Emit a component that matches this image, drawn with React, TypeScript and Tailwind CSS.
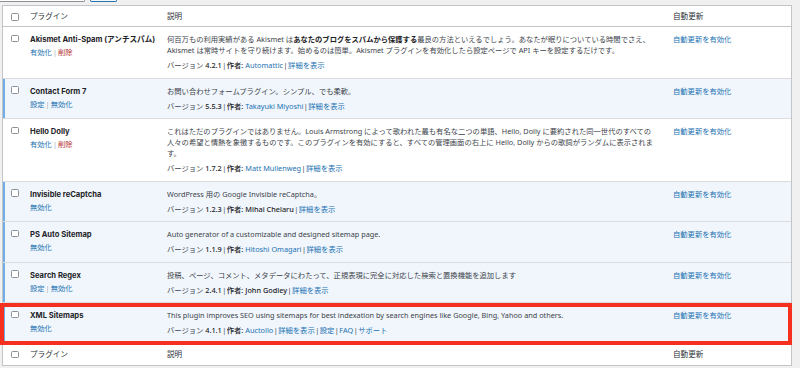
import React from "react";

const link = "text-[#2271b1]";

function Checkbox() {
  return <div className="w-[7.5px] h-[7.5px] rounded-[1.5px] border border-[#8c8f94] bg-white" />;
}

function Sep() {
  return <span className="text-[#a7aaad] mx-[1px]">|</span>;
}

function VSep() {
  return <span className="mx-[0.5px]">|</span>;
}

type RowProps = {
  active?: boolean;
  name: string;
  actions: React.ReactNode;
  desc: React.ReactNode;
  version: React.ReactNode;
};

function Row({ active, name, actions, desc, version }: RowProps) {
  return (
    <div
      className={`grid grid-cols-[22px_135px_506px_1fr] border-b border-[#dcdcde] ${
        active ? "bg-[#f0f6fc] shadow-[inset_2px_0_0_#72aee6]" : "bg-white"
      }`}
    >
      <div className="pl-[8px] pt-[7.5px]">
        <Checkbox />
      </div>
      <div className="pl-[5px] pt-[7px] pb-[6.5px]">
        <div className="font-bold text-[7.6px] font-[family-name:Inter,'Noto_Sans_CJK_JP',sans-serif] text-[#1d2327] leading-[11px] whitespace-nowrap">
          {name}
        </div>
        <div className="mt-[2px] leading-[11px] whitespace-nowrap">{actions}</div>
      </div>
      <div className="pl-[7px] pt-[7px] pb-[6.5px]">
        <div className="leading-[11px] whitespace-nowrap">{desc}</div>
        <div className="mt-[4px] leading-[11px] whitespace-nowrap">{version}</div>
      </div>
      <div className="pl-[7px] pt-[7px] leading-[11px] whitespace-nowrap">
        <span className={link}>自動更新を有効化</span>
      </div>
    </div>
  );
}

function HeadRow({ top }: { top?: boolean }) {
  return (
    <div
      className={`grid grid-cols-[22px_135px_506px_1fr] h-[21px] bg-white text-[7.6px] text-[#2c3338] ${
        top ? "border-b border-[#c3c4c7]" : ""
      }`}
    >
      <div className="pl-[8px] pt-[7px]">
        <Checkbox />
      </div>
      <div className="pl-[5px] pt-[5px] leading-[11px]">プラグイン</div>
      <div className="pl-[7px] pt-[5px] leading-[11px]">説明</div>
      <div className="pl-[7px] pt-[5px] leading-[11px]">自動更新</div>
    </div>
  );
}

function Ver({
  v,
  author,
  authorLink,
  extra,
}: {
  v: string;
  author: string;
  authorLink?: boolean;
  extra?: React.ReactNode;
}) {
  return (
    <>
      バージョン <span className="font-medium text-[#1d2327]">{v}</span>
      <VSep />
      <span className="font-medium text-[#1d2327]">作者:</span>{" "}
      {authorLink ? (
        <span className={link}>{author}</span>
      ) : (
        <span className="font-medium text-[#1d2327]">{author}</span>
      )}
      <VSep />
      <span className={link}>詳細を表示</span>
      {extra}
    </>
  );
}

export default function App() {
  return (
    <div className="w-[800px] h-[368px] overflow-hidden bg-[#f0f0f1] text-[7.3px] text-[#3c434a] font-[family-name:'Noto_Sans','Noto_Sans_CJK_JP',sans-serif]">
      <div className="flex h-[5px] items-start">
        <div className="w-[85px] h-[2px] bg-white border-b border-r border-[#8c8f94] rounded-br-[2px]" />
        <div className="ml-[5px] w-[27px] h-[2px] bg-[#f6f7f7] border-b border-x border-[#2271b1] rounded-b-[2px]" />
      </div>
      <div className="ml-[2px] w-[790px] border border-[#c3c4c7] bg-white">
        <HeadRow top />
        <Row
          name="Akismet Anti-Spam (アンチスパム)"
          actions={
            <>
              <span className={link}>有効化</span>
              <Sep />
              <span className="text-[#b32d2e]">削除</span>
            </>
          }
          desc={
            <>
              何百万もの利用実績がある Akismet は
              <b className="font-bold text-[#1d2327]">あなたのブログをスパムから保護する</b>
              最良の方法といえるでしょう。あなたが眠りについている時間でさえ、
              <br />
              Akismet は常時サイトを守り続けます。始めるのは簡単。Akismet プラグインを有効化したら設定ページで API キーを設定するだけです。
            </>
          }
          version={<Ver v="4.2.1" author="Automattic" authorLink />}
        />
        <Row
          active
          name="Contact Form 7"
          actions={
            <>
              <span className={link}>設定</span>
              <Sep />
              <span className={link}>無効化</span>
            </>
          }
          desc="お問い合わせフォームプラグイン。シンプル、でも柔軟。"
          version={<Ver v="5.5.3" author="Takayuki Miyoshi" authorLink />}
        />
        <Row
          name="Hello Dolly"
          actions={
            <>
              <span className={link}>有効化</span>
              <Sep />
              <span className="text-[#b32d2e]">削除</span>
            </>
          }
          desc={
            <>
              これはただのプラグインではありません。Louis Armstrong によって歌われた最も有名な二つの単語、Hello, Dolly に要約された同一世代のすべての
              <br />
              人々の希望と情熱を象徴するものです。このプラグインを有効にすると、すべての管理画面の右上に Hello, Dolly からの歌詞がランダムに表示されま
              <br />
              す。
            </>
          }
          version={<Ver v="1.7.2" author="Matt Mullenweg" authorLink />}
        />
        <Row
          active
          name="Invisible reCaptcha"
          actions={<span className={link}>無効化</span>}
          desc="WordPress 用の Google Invisible reCaptcha。"
          version={<Ver v="1.2.3" author="Mihai Chelaru" />}
        />
        <Row
          active
          name="PS Auto Sitemap"
          actions={<span className={link}>無効化</span>}
          desc="Auto generator of a customizable and designed sitemap page."
          version={<Ver v="1.1.9" author="Hitoshi Omagari" authorLink />}
        />
        <Row
          active
          name="Search Regex"
          actions={
            <>
              <span className={link}>設定</span>
              <Sep />
              <span className={link}>無効化</span>
            </>
          }
          desc="投稿、ページ、コメント、メタデータにわたって、正規表現に完全に対応した検索と置換機能を追加します"
          version={<Ver v="2.4.1" author="John Godley" />}
        />
        <div className="relative">
          <Row
            active
            name="XML Sitemaps"
            actions={<span className={link}>無効化</span>}
            desc="This plugin improves SEO using sitemaps for best indexation by search engines like Google, Bing, Yahoo and others."
            version={
              <Ver
                v="4.1.1"
                author="Auctollo"
                authorLink
                extra={
                  <>
                    <VSep />
                    <span className={link}>設定</span>
                    <VSep />
                    <span className={link}>FAQ</span>
                    <VSep />
                    <span className={link}>サポート</span>
                  </>
                }
              />
            }
          />
          <div className="absolute left-[-3px] right-[-1px] top-0 bottom-[-1px] border-[4px] border-[#f5301f] pointer-events-none" />
        </div>
        <HeadRow />
      </div>
    </div>
  );
}
